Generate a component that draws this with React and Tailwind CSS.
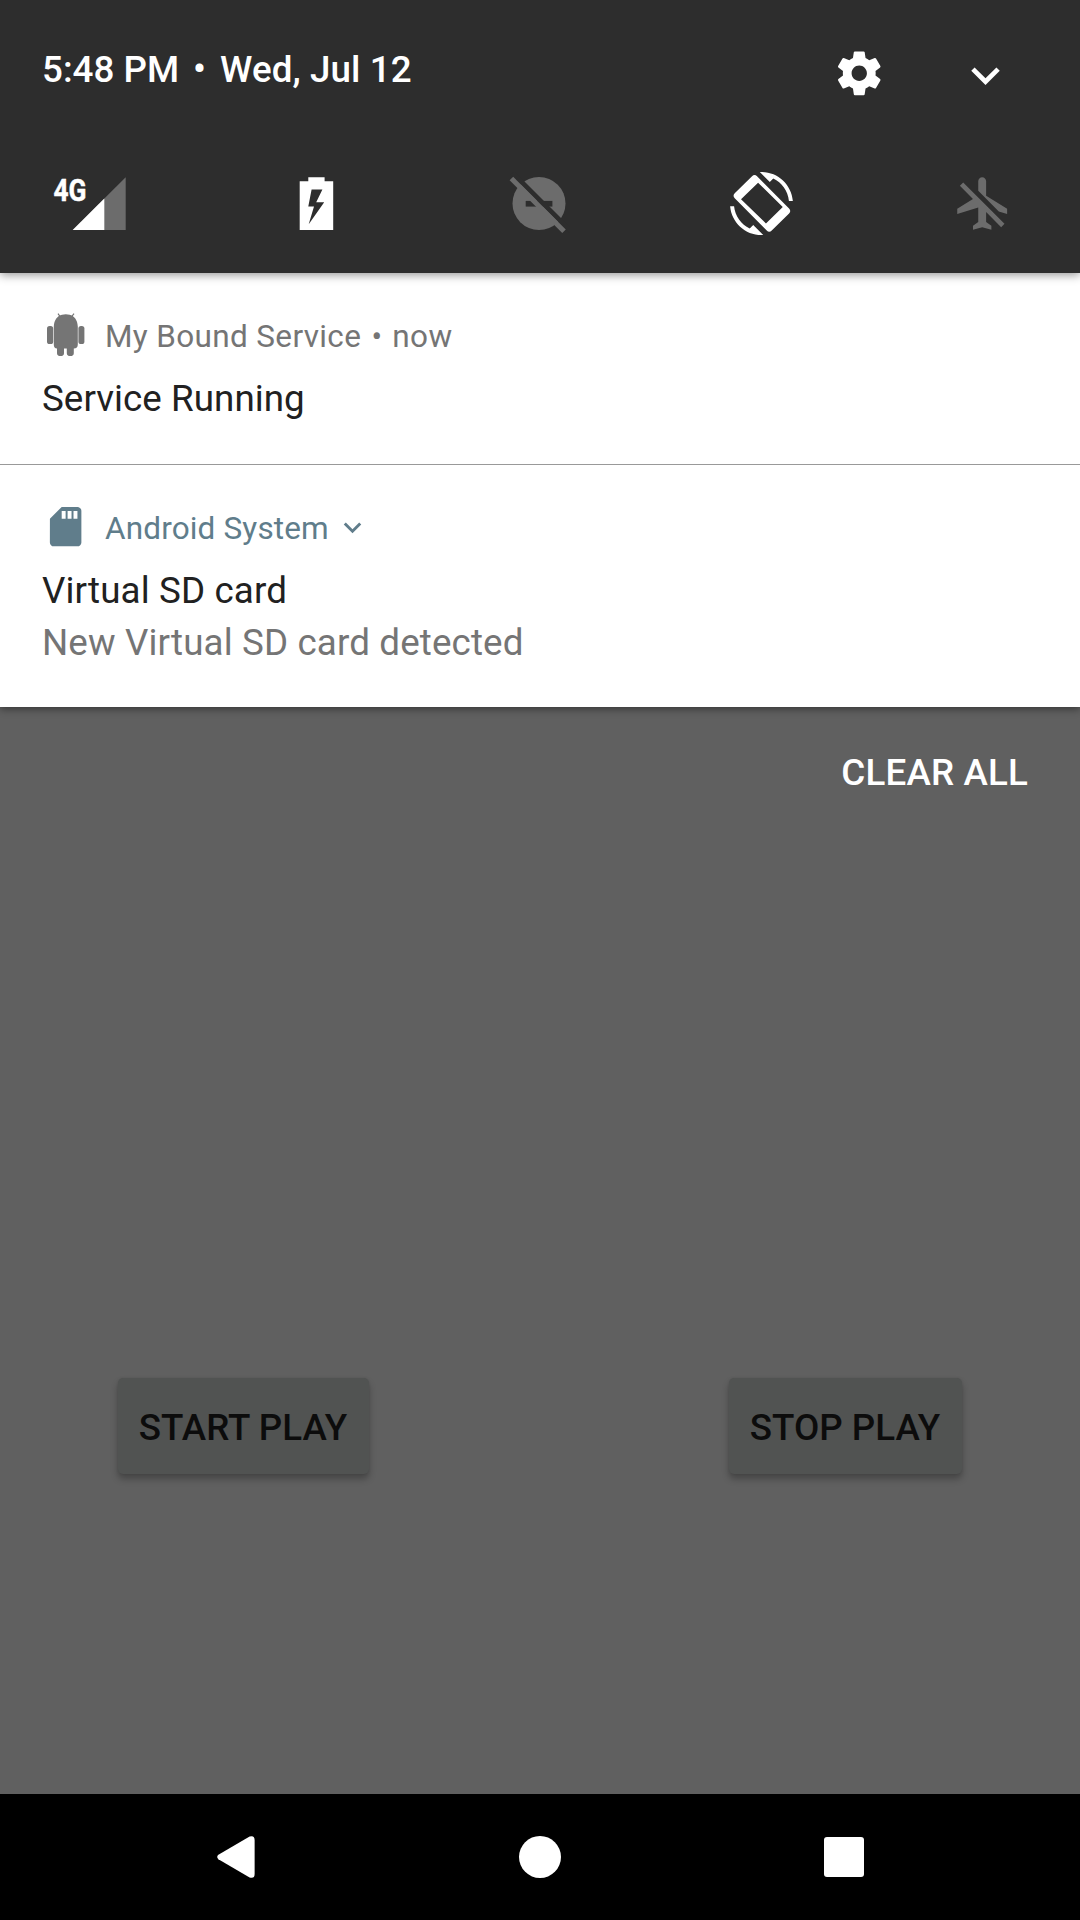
import React from "react";

function Gear() {
  return (
    <svg viewBox="0 0 24 24" className="h-[52.5px] w-[52.5px]" fill="#fff">
      <path d="M19.43 12.98c.04-.32.07-.64.07-.98s-.03-.66-.07-.98l2.11-1.65c.19-.15.24-.42.12-.64l-2-3.46c-.12-.22-.39-.3-.61-.22l-2.49 1c-.52-.4-1.08-.73-1.69-.98l-.38-2.65C14.46 2.18 14.25 2 14 2h-4c-.25 0-.46.18-.49.42l-.38 2.65c-.61.25-1.17.59-1.69.98l-2.49-1c-.23-.09-.49 0-.61.22l-2 3.46c-.13.22-.07.49.12.64l2.11 1.65c-.04.32-.07.65-.07.98s.03.66.07.98l-2.11 1.65c-.19.15-.24.42-.12.64l2 3.46c.12.22.39.3.61.22l2.49-1c.52.4 1.08.73 1.69.98l.38 2.65c.03.24.24.42.49.42h4c.25 0 .46-.18.49-.42l.38-2.65c.61-.25 1.17-.59 1.69-.98l2.49 1c.23.09.49 0 .61-.22l2-3.46c.12-.22.07-.49-.12-.64l-2.11-1.65zM12 15.5c-1.93 0-3.5-1.57-3.5-3.5s1.57-3.5 3.5-3.5 3.5 1.57 3.5 3.5-1.57 3.5-3.5 3.5z" />
    </svg>
  );
}

function Chevron({ className }) {
  return (
    <svg viewBox="0 0 24 24" className={className} fill="currentColor">
      <path d="M16.59 8.59L12 13.17 7.41 8.59 6 10l6 6 6-6z" />
    </svg>
  );
}

function Signal() {
  return (
    <svg viewBox="50 172 80 63" className="h-[63px] w-[80px]">
      <path d="M72.7 230H125.7V177.2Z" fill="#6c6c6c" />
      <path d="M72.7 230H104.3V198.6Z" fill="#fff" />
      <text x="53.5" y="201.2" fontSize="32" fontWeight="700" fill="#fff" stroke="#fff" strokeWidth="0.5" textLength="33" lengthAdjust="spacingAndGlyphs" className="font-[Roboto,sans-serif]">4G</text>
    </svg>
  );
}

function Battery() {
  return (
    <svg viewBox="285 172 63 63" className="h-[63px] w-[63px]">
      <path fillRule="evenodd" fill="#fff" d="M308.3 177.2H324.6V181.3H333.2V230H299.7V181.3H308.3ZM311.6 189.6L308.3 206.4H314L308.7 224.2L324.2 202.3H316.2L322.4 189.6Z" />
    </svg>
  );
}

function DoNotDisturbOff() {
  return (
    <svg viewBox="507 172 63 63" className="h-[63px] w-[63px]">
      <circle cx="539" cy="203.4" r="26.5" fill="#6c6c6c" />
      <path d="M525.7 200.9H552.4V206.6H525.7Z" fill="#2d2d2d" />
      <path d="M509 174.6L568 233.6" stroke="#2d2d2d" strokeWidth="4.8" transform="translate(3.4 -1.8)" />
      <path d="M511.4 178.6L564 231.2" stroke="#6c6c6c" strokeWidth="5" />
    </svg>
  );
}

function AutoRotate() {
  return (
    <svg viewBox="0 0 24 24" className="h-[63px] w-[63px]" fill="#fff">
      <path d="M16.48 2.52c3.27 1.55 5.61 4.72 5.97 8.48h1.5C23.44 4.84 18.29 0 12 0l-.66.03 3.81 3.81 1.33-1.32zM7.52 21.48C4.25 19.94 1.91 16.76 1.55 13H.05C.56 19.16 5.71 24 12 24l.66-.03-3.81-3.81-1.33 1.32z" />
      <path fillRule="evenodd" d="M10.3 1.6c-.6-.6-1.3-.6-1.9 0L1.8 8.1c-.6.6-.6 1.3 0 1.9l12.2 12.3c.6.6 1.3.6 1.9 0l6.6-6.5c.6-.6.6-1.3 0-1.9zM10.7 4.1L4.2 10.4 13.7 19.6 20.1 13.3z" />
    </svg>
  );
}

function AirplaneOff() {
  return (
    <svg viewBox="0 0 24 24" className="h-[63px] w-[63px]" fill="#6c6c6c">
      <path d="M13 9V3.5c0-.83-.67-1.5-1.5-1.5S10 2.67 10 3.5v3.68l7.83 7.83L21 16v-2l-8-5zM3 5.27l4.99 4.99L2 14v2l8-2.5V19l-2 1.5V22l3.5-1 3.5 1v-1.5L13 19v-3.73L18.73 21 20 19.73 4.27 4 3 5.27z" />
    </svg>
  );
}

function Robot() {
  return (
    <svg viewBox="42 310 48 48" className="h-[48px] w-[48px]" fill="#757575">
      <path d="M58 313.6L60.4 317M74 313.6L71.4 317" stroke="#757575" strokeWidth="1.2" />
      <path d="M53.8 326.4C54 320 57.5 315.6 62 314.7Q65.8 313.8 69.6 314.7C74.1 315.6 77.6 320 77.8 326.4V344.6Q77.8 348.6 73.8 348.6V353.2A3.5 2.8 0 0 1 66.8 353.2V348.6H64V353.2A3.5 2.8 0 0 1 57 353.2V348.6Q53.8 348.6 53.8 344.6Z" />
      <rect x="47" y="326" width="6.2" height="18" rx="2.6" />
      <rect x="78.4" y="326" width="6" height="18" rx="2.6" />
    </svg>
  );
}

function SdCard() {
  return (
    <svg viewBox="0 0 24 24" className="h-[47.25px] w-[47.25px]" fill="#607d8b">
      <path d="M18 2h-8L4.02 8 4 20c0 1.1.9 2 2 2h12c1.1 0 2-.9 2-2V4c0-1.1-.9-2-2-2zm-6 6h-2V4h2v4zm3 0h-2V4h2v4zm3 0h-2V4h2v4z" />
    </svg>
  );
}

function PlayButton({ className, children }) {
  return (
    <button className={`h-24 rounded-[5px] bg-[#515352] pt-[3px] pr-[1px] font-medium text-[#0c0c0c] shadow-[0_5px_7px_rgba(0,0,0,0.28),0_0_3px_rgba(0,0,0,0.08)] ${className}`}>
      {children}
    </button>
  );
}

export default function App() {
  return (
    <div className="flex h-[1920px] w-[1080px] flex-col overflow-hidden bg-[#606060] font-[Roboto,sans-serif] text-[36.75px] leading-[44px] whitespace-nowrap">
      <header className="relative z-10 h-[273px] shrink-0 bg-[#2d2d2d] text-white shadow-[0_2px_9px_rgba(0,0,0,0.42)]">
        <div className="flex h-[122px] items-start pr-[66px] pl-[42px]">
          <div className="flex pt-[48px] font-medium">
            <span className="w-[137px]">5:48 PM</span>
            <span className="-mt-[1px] w-[41px] text-center">•</span>
            <span className="tracking-[0.1px]">Wed, Jul 12</span>
          </div>
          <div className="ml-auto flex items-start gap-[72px] pt-[47px]">
            <Gear />
            <Chevron className="-mt-[0.5px] h-[57px] w-[57px]" />
          </div>
        </div>
        <div className="flex pt-[50px] pl-[50px]">
          <Signal />
          <div className="ml-[155px] flex gap-[159px]">
            <Battery />
            <DoNotDisturbOff />
          </div>
          <div className="ml-[160px] flex gap-[159px]">
            <AutoRotate />
            <AirplaneOff />
          </div>
        </div>
      </header>

      <main className="z-[5] shrink-0 bg-white text-[#212121] shadow-[0_2px_8px_rgba(0,0,0,0.45)]">
        <section className="h-[192px] border-b border-[#999] pt-[37px] pl-[42px]">
          <div className="flex h-[48px] items-center text-[31.5px] text-[#757575]">
            <Robot />
            <span className="ml-[15px] pt-[5px] tracking-[0.35px]">My Bound Service</span>
            <span className="w-[31px] pt-[5px] text-center">•</span>
            <span className="pt-[5px] tracking-[0.4px]">now</span>
          </div>
          <p className="mt-[19px] tracking-[0.05px]">Service Running</p>
        </section>
        <section className="h-[242px] pt-[38px] pl-[42px]">
          <div className="flex h-[48px] items-center text-[31.5px] text-[#607d8b]">
            <SdCard />
            <span className="ml-[15.75px] pt-[3px] tracking-[0.15px]">Android System</span>
            <Chevron className="mt-[1px] ml-[6px] h-[35px] w-[35px]" />
          </div>
          <p className="mt-[18px] tracking-[0.13px]">Virtual SD card</p>
          <p className="mt-[8px] tracking-[0.13px] text-[#757575]">New Virtual SD card detected</p>
        </section>
      </main>

      <div className="flex h-[671px] shrink-0 items-start justify-end pt-[44px] pr-[52px] font-medium text-white">
        <button className="tracking-[0.15px]">CLEAR ALL</button>
      </div>

      <div className="flex flex-1 items-start gap-[360px] pl-[118px]">
        <PlayButton className="w-[251px]">START PLAY</PlayButton>
        <PlayButton className="w-[233px]">STOP PLAY</PlayButton>
      </div>

      <nav className="flex h-[126px] shrink-0 items-center justify-between bg-black pr-[216px] pl-[217px]">
        <svg viewBox="0 0 38 42" className="h-[42px] w-[38px]" fill="#fff">
          <path d="M1.4 18.8L32.6.5Q37.6-1 37.6 4V38Q37.6 43 32.6 41.5L1.4 23.2Q-1 21 1.4 18.8Z" />
        </svg>
        <div className="h-[42px] w-[42px] rounded-full bg-white" />
        <div className="h-[40px] w-[40px] rounded-[3px] bg-white" />
      </nav>
    </div>
  );
}
